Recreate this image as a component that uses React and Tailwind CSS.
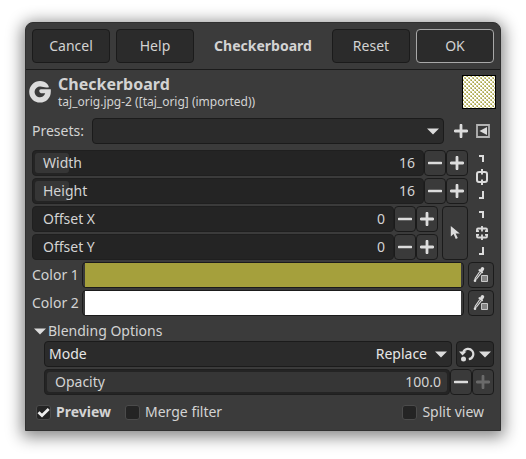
import React from "react";

const raised = "rounded-[4px] border border-[#1b1b1b] bg-[#3a3a3a]";
const dark = "rounded-[4px] border border-[#1b1b1b] bg-[#2b2b2b]";

function Minus() {
  return (
    <svg width="14" height="14" viewBox="0 0 14 14" aria-hidden="true">
      <path d="M1 7h12" stroke="currentColor" strokeWidth="2.6" strokeLinecap="round" />
    </svg>
  );
}

function Plus() {
  return (
    <svg width="14" height="14" viewBox="0 0 14 14" aria-hidden="true">
      <path d="M1.2 7h11.6M7 1.2v11.6" stroke="currentColor" strokeWidth="2.8" strokeLinecap="round" />
    </svg>
  );
}

function Triangle() {
  return (
    <svg width="12" height="7" viewBox="0 0 12 7" aria-hidden="true" className="shrink-0">
      <path d="M0 .5h12L6 6.5z" fill="#dcdcdc" />
    </svg>
  );
}

function ActionButton({ children, primary }) {
  return (
    <button
      type="button"
      className={
        primary
          ? "h-[34px] w-[78px] rounded-[4px] border border-[#a8a8a8] bg-[#2b2b2b]"
          : "h-[34px] w-[78px] rounded-[4px] border border-[#1b1b1b] bg-[#2b2b2b]"
      }
    >
      {children}
    </button>
  );
}

function StepButton({ label, disabled, children }) {
  return (
    <button
      type="button"
      aria-label={label}
      disabled={disabled}
      className={`${raised} flex h-[26px] w-[22px] shrink-0 items-center justify-center text-[#dcdcdc] disabled:text-[#6a6a6a]`}
    >
      {children}
    </button>
  );
}

function SpinScale({ id, label, value, fill, maxed }) {
  return (
    <div className="flex">
      <div className="relative flex h-[26px] min-w-0 flex-1 items-center rounded-[4px] border border-[#1f1f1f] bg-[#242424] pr-2 pl-[10px]">
        {fill && <div className={`absolute inset-y-[2px] left-[2px] rounded-[3px] bg-[#363636] ${fill}`} />}
        <label htmlFor={id} className="relative">{label}</label>
        <input
          id={id}
          type="text"
          defaultValue={value}
          className="relative h-5 w-0 min-w-0 flex-1 bg-transparent text-right outline-none"
        />
      </div>
      <StepButton label={`Decrease ${label}`}><Minus /></StepButton>
      <StepButton label={`Increase ${label}`} disabled={maxed}><Plus /></StepButton>
    </div>
  );
}

function Bracket({ down }) {
  return (
    <svg width="6" height="8" viewBox="0 0 6 8" aria-hidden="true" shapeRendering="crispEdges">
      <path d={down ? "M0 7h4V0" : "M0 1h4V7"} fill="none" stroke="#dcdcdc" strokeWidth="2" />
    </svg>
  );
}

function Chain({ label, broken }) {
  return (
    <button type="button" aria-label={label} className="flex h-[54px] w-4 flex-col items-center justify-between py-[5px]">
      <Bracket />
      <svg width="12" height="16" viewBox="0 0 12 16" aria-hidden="true" fill="none" stroke="#dcdcdc" strokeWidth="1.8">
        {broken ? (
          <path d="M6 1v5.500M1 6V4.500Q1 3.500 2 3.500h8q1 0 1 1V6M0 6.200h3M9 6.200H12M6 9.500V15M1 10v1.500q0 1 1 1h8q1 0 1-1V10M0 9.800h3M9 9.800H12" />
        ) : (
          <path d="M3 3Q1 3 1 5v6q0 2 2 2M9 3q2 0 2 2v6q0 2-2 2M2.500 3h7M2.500 13h7M6 0v5.500M6 10.500V16" strokeWidth="2" />
        )}
      </svg>
      <Bracket down />
    </button>
  );
}

function ColorRow({ label, color }) {
  return (
    <div className="flex items-center">
      <span className="w-[50px] shrink-0 whitespace-nowrap">{label}</span>
      <button type="button" aria-label={label} className={`${raised} h-[26px] min-w-0 flex-1 px-[2px]`}>
        <span className={`block h-6 w-full ${color}`} />
      </button>
      <button type="button" aria-label={`Pick ${label}`} className={`${raised} ml-1 flex h-[26px] w-[26px] shrink-0 items-center justify-center`}>
        <svg width="16" height="18" viewBox="0 0 16 18" aria-hidden="true">
          <path d="M8.200 1.600Q9.500.300 10.700 1.500T10.700 4.300L9.600 5.600l.6 1-1.200 1-3.800-3.300 1-1.200 1 .4z" fill="#dcdcdc" />
          <path d="M6.800 5.500 2.200 12.200 2 13.600 3.400 13 8.200 6.800" fill="none" stroke="#dcdcdc" strokeWidth="1.100" />
          <circle cx="2" cy="14.700" r="1.300" fill="#dcdcdc" />
          <path d="M8.500 9.500h6v6h-6z" fill="#858585" stroke="#c8c8c8" />
        </svg>
      </button>
    </div>
  );
}

function Check({ label, checked, bold }) {
  return (
    <label className={bold ? "flex items-center gap-[5px] font-bold" : "flex items-center gap-[5px]"}>
      <span className="relative flex h-[15px] w-[15px]">
        <input
          type="checkbox"
          defaultChecked={checked}
          className="peer h-[15px] w-[15px] appearance-none rounded-[3px] border border-[#4b4b4b] bg-[#242424]"
        />
        <svg viewBox="0 0 15 15" aria-hidden="true" className="pointer-events-none absolute inset-0 hidden peer-checked:block">
          <path d="M2.5 7.2 6 10.5 12.7 4" fill="none" stroke="#eeeeee" strokeWidth="2.8" />
        </svg>
      </span>
      {label}
    </label>
  );
}

export default function App() {
  return (
    <div className="min-h-screen bg-white px-[25px] pt-[22px] pb-7 font-['Noto_Sans',sans-serif] text-[14px] leading-5 text-[#d3d3d3]">
      <main className="rounded-t-[8px] border border-[#303030] bg-[#3b3b3b] shadow-[0_3px_16px_3px_rgba(0,0,0,0.48)]">
        <header className="flex items-center justify-between border-b border-[#1b1b1b] px-[6px] py-[6px]">
          <div className="flex gap-[6px]">
            <ActionButton>Cancel</ActionButton>
            <ActionButton>Help</ActionButton>
          </div>
          <h1 className="font-bold">Checkerboard</h1>
          <div className="flex gap-[6px]">
            <ActionButton>Reset</ActionButton>
            <ActionButton primary>OK</ActionButton>
          </div>
        </header>

        <section className="flex items-center pt-1 pr-1 pl-[3px]">
          <svg width="22" height="22" viewBox="0 0 22 22" aria-hidden="true" className="shrink-0">
            <path
              d="M18.500 3.200C16.500 1.100 13.900 0 11 0a10.800 10.800 0 1 0 10.800 10.800V8.300H12c-1.300 0-1.900.9-1.700 1.900.3 1.400 1.300 2.100 2.700 2.100h3.200a5.400 5.400 0 1 1-4.600-6.700c2.500.8 5.900 1 8.400.6-.3-1.100-.8-2.100-1.500-3z"
              fill="#dcdcdc"
            />
          </svg>
          <div className="ml-[7px] min-w-0 flex-1">
            <h2 className="text-[16px] leading-5 font-bold">Checkerboard</h2>
            <p className="text-[12px] leading-4">taj_orig.jpg-2 ([taj_orig] (imported))</p>
          </div>
          <svg width="34" height="34" viewBox="0 0 34 34" role="img" aria-label="Checkerboard preview" className="shrink-0" shapeRendering="crispEdges">
            <defs>
              <pattern id="checks" width="4" height="4" patternUnits="userSpaceOnUse">
                <path d="M0 0h4v4H0z" fill="#fff" />
                <path d="M0 0h2v2H0zM2 2h2v2H2z" fill="#cecb92" />
                <path d="M1 1h1v1H1zM3 3h1v1H3z" fill="#a5a03c" />
              </pattern>
            </defs>
            <path d="M0 0h34v34H0z" fill="#000" />
            <path d="M1 1h32v32H1z" fill="url(#checks)" />
          </svg>
        </section>

        <div className="flex flex-col gap-[2px] px-[6px] pt-2 pb-2">
          <div className="mb-1 flex items-center">
            <label htmlFor="presets" className="w-[60px] shrink-0">Presets:</label>
            <div className={`${dark} flex h-[26px] min-w-0 flex-1 items-center pr-[4px]`}>
              <select id="presets" className="h-6 min-w-0 flex-1 appearance-none bg-transparent outline-none">
                <option></option>
              </select>
              <Triangle />
            </div>
            <button type="button" aria-label="Add preset" className="ml-[10px] text-[#dcdcdc]"><Plus /></button>
            <button type="button" aria-label="Manage presets" className="mr-1 ml-2">
              <svg width="14" height="14" viewBox="0 0 14 14" aria-hidden="true">
                <path d="M1 1h12v12H1z" fill="none" stroke="#b4b4b4" strokeWidth="1.8" />
                <path d="M11 3v8L3.500 7z" fill="#dcdcdc" />
              </svg>
            </button>
          </div>

          <div className="flex">
            <div className="flex min-w-0 flex-1 flex-col gap-[2px]">
              <SpinScale id="width" label="Width" value="16" fill="w-[34px]" />
              <SpinScale id="height" label="Height" value="16" fill="w-[34px]" />
            </div>
            <div className="mr-1 ml-[6px] flex"><Chain label="Link width and height" /></div>
          </div>

          <div className="flex">
            <div className="flex min-w-0 flex-1 flex-col gap-[2px]">
              <SpinScale id="offset-x" label="Offset X" value="0" />
              <SpinScale id="offset-y" label="Offset Y" value="0" />
            </div>
            <button type="button" aria-label="Pick offset from image" className={`${raised} ml-1 flex h-[54px] w-[26px] shrink-0 items-center justify-center`}>
              <svg width="10" height="14" viewBox="0 0 10 14" aria-hidden="true">
                <path d="M.8 0v10.500l2.800-2.400 2.200 4.900 2-1-2.200-4.500H9.800z" fill="#dcdcdc" />
              </svg>
            </button>
            <div className="mr-1 ml-[6px] flex"><Chain label="Link offsets" broken /></div>
          </div>

          <ColorRow label="Color 1" color="bg-[#a5a03c]" />
          <ColorRow label="Color 2" color="bg-white" />

          <button type="button" aria-expanded="true" className="mt-[3px] flex items-center gap-[2px] pl-[2px]">
            <Triangle />
            <span>Blending Options</span>
          </button>

          <div className="-mt-[2px] flex flex-col gap-[2px] pl-3">
            <div className="flex gap-1">
              <div className={`${dark} flex h-[26px] min-w-0 flex-1 items-center pr-[4px] pl-1 text-[#e6e6e6]`}>
                <label htmlFor="mode">Mode</label>
                <select id="mode" className="mr-2 h-6 w-0 min-w-0 flex-1 appearance-none bg-transparent text-right outline-none [text-align-last:right]">
                  <option>Replace</option>
                </select>
                <Triangle />
              </div>
              <button type="button" aria-label="Switch mode group" className={`${dark} flex h-[26px] w-[38px] shrink-0 items-center justify-center gap-1`}>
                <svg width="16" height="16" viewBox="0 0 16 16" aria-hidden="true" className="shrink-0">
                  <path d="M4.300 6A5.200 5.200 0 1 1 9.800 13.200" fill="none" stroke="#dcdcdc" strokeWidth="2.200" />
                  <path d="M0 5.500h7.500L3.500 9.500z" fill="#dcdcdc" />
                  <circle cx="4.500" cy="13" r="2.500" fill="#dcdcdc" />
                </svg>
                <Triangle />
              </button>
            </div>
            <SpinScale id="opacity" label="Opacity" value="100.0" fill="right-[2px]" maxed />
          </div>

          <div className="mt-[5px] flex items-center pr-[10px] pl-1">
            <Check label="Preview" checked bold />
            <div className="ml-[14px]"><Check label="Merge filter" /></div>
            <div className="ml-auto"><Check label="Split view" /></div>
          </div>
        </div>
      </main>
    </div>
  );
}
